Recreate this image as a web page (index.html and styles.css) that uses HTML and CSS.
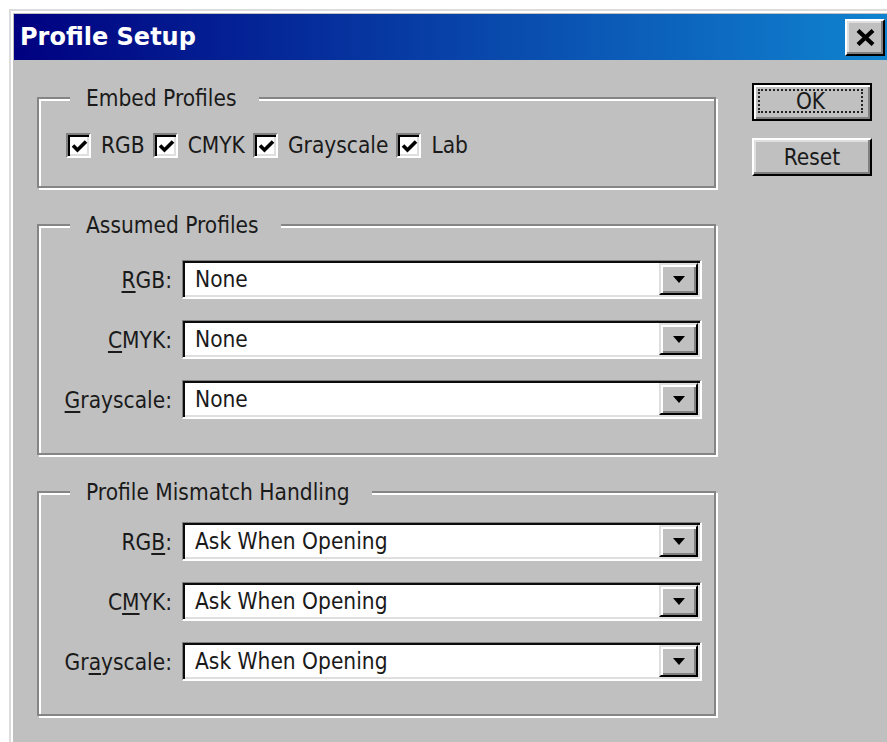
FILE: index.html
```html
<!DOCTYPE html>
<html lang="en">
<head>
<meta charset="utf-8">
<title>Profile Setup</title>
<link rel="stylesheet" href="styles.css">
</head>
<body>
<div class="window">
  <div class="titlebar">
    <span class="title">Profile Setup</span>
    <span class="close-btn">
      <svg width="19" height="17" viewBox="0 0 19 17"><path d="M2 1.5 L17 15.5 M17 1.5 L2 15.5" stroke="#000" stroke-width="4.2" fill="none"/></svg>
    </span>
  </div>

  <div class="dialog-body">
    <div class="groups">
      <section class="group group-embed">
        <div class="group-title">Embed Profiles</div>
        <div class="check-row">
          <label class="check"><span class="box"><svg width="17" height="17" viewBox="0 0 17 17"><path d="M2 7.5 L6.5 12 L15 3.5" stroke="#000" stroke-width="3.6" fill="none"/></svg></span>RGB</label>
          <label class="check"><span class="box"><svg width="17" height="17" viewBox="0 0 17 17"><path d="M2 7.5 L6.5 12 L15 3.5" stroke="#000" stroke-width="3.6" fill="none"/></svg></span>CMYK</label>
          <label class="check"><span class="box"><svg width="17" height="17" viewBox="0 0 17 17"><path d="M2 7.5 L6.5 12 L15 3.5" stroke="#000" stroke-width="3.6" fill="none"/></svg></span>Grayscale</label>
          <label class="check"><span class="box"><svg width="17" height="17" viewBox="0 0 17 17"><path d="M2 7.5 L6.5 12 L15 3.5" stroke="#000" stroke-width="3.6" fill="none"/></svg></span>Lab</label>
        </div>
      </section>

      <section class="group group-assumed">
        <div class="group-title">Assumed Profiles</div>
        <div class="field-list">
          <div class="field"><span class="field-label"><u>R</u>GB:</span><div class="select"><span class="value">None</span><span class="drop-btn"><svg width="12" height="7" viewBox="0 0 12 7"><path d="M0 0 H12 L6 7 Z" fill="#000"/></svg></span></div></div>
          <div class="field"><span class="field-label"><u>C</u>MYK:</span><div class="select"><span class="value">None</span><span class="drop-btn"><svg width="12" height="7" viewBox="0 0 12 7"><path d="M0 0 H12 L6 7 Z" fill="#000"/></svg></span></div></div>
          <div class="field"><span class="field-label"><u>G</u>rayscale:</span><div class="select"><span class="value">None</span><span class="drop-btn"><svg width="12" height="7" viewBox="0 0 12 7"><path d="M0 0 H12 L6 7 Z" fill="#000"/></svg></span></div></div>
        </div>
      </section>

      <section class="group group-mismatch">
        <div class="group-title">Profile Mismatch Handling</div>
        <div class="field-list">
          <div class="field"><span class="field-label">RG<u>B</u>:</span><div class="select"><span class="value">Ask When Opening</span><span class="drop-btn"><svg width="12" height="7" viewBox="0 0 12 7"><path d="M0 0 H12 L6 7 Z" fill="#000"/></svg></span></div></div>
          <div class="field"><span class="field-label">C<u>M</u>YK:</span><div class="select"><span class="value">Ask When Opening</span><span class="drop-btn"><svg width="12" height="7" viewBox="0 0 12 7"><path d="M0 0 H12 L6 7 Z" fill="#000"/></svg></span></div></div>
          <div class="field"><span class="field-label">Gr<u>a</u>yscale:</span><div class="select"><span class="value">Ask When Opening</span><span class="drop-btn"><svg width="12" height="7" viewBox="0 0 12 7"><path d="M0 0 H12 L6 7 Z" fill="#000"/></svg></span></div></div>
        </div>
      </section>
    </div>

    <div class="buttons">
      <button class="btn btn-default"><span class="focus">OK</span></button>
      <button class="btn">Reset</button>
    </div>
  </div>
</div>
</body>
</html>
```

FILE: styles.css
```css
html, body {
  margin: 0;
  padding: 0;
  background: #fff;
  overflow: hidden;
}

body {
  width: 887px;
  height: 742px;
  font-family: "DejaVu Sans Condensed", "Liberation Sans", sans-serif;
  font-size: 22.5px;
  color: #1a1a1a;
}

/* window frame */
.window {
  box-sizing: border-box;
  margin: 9px 0 0 9px;
  width: 880px;
  height: 740px;
  border-top: 2px solid #dcdcdc;
  border-left: 2px solid #dcdcdc;
  padding: 3px 0 0 3px;
  background: #c0c0c0;
  box-shadow: inset 2px 2px 0 #fff;
}

.titlebar {
  height: 46px;
  display: flex;
  align-items: center;
  justify-content: space-between;
  padding: 0 4px 0 6px;
  background: linear-gradient(to right, #000080, #1084d0);
}

.title {
  font-family: "DejaVu Sans", "Liberation Sans", sans-serif;
  font-weight: bold;
  font-size: 24px;
  color: #fff;
  line-height: 1;
}

.close-btn {
  box-sizing: border-box;
  width: 40px;
  height: 37px;
  display: flex;
  align-items: center;
  justify-content: center;
  background: #c0c0c0;
  border-style: solid;
  border-width: 2px;
  border-color: #fff #000 #000 #fff;
  box-shadow: inset -2px -2px 0 #808080, inset 2px 2px 0 #dfdfdf;
}

/* dialog content */
.dialog-body {
  display: flex;
  align-items: flex-start;
  gap: 36px;
  padding: 23px 0 0 23px;
}

.groups {
  width: 679px;
  margin-top: 14px;
  display: flex;
  flex-direction: column;
  gap: 36px;
}

.group {
  box-sizing: border-box;
  border: 2px solid #858585;
  box-shadow: inset 2px 2px 0 #fff, 2px 2px 0 #fff;
}

.group-title {
  width: fit-content;
  margin: -14px 0 0 31px;
  padding: 0 22px 0 16px;
  line-height: 26px;
  background: #c0c0c0;
  white-space: nowrap;
}

.group-embed { padding-bottom: 28px; }
.group-assumed { padding-bottom: 34px; }
.group-mismatch { padding-bottom: 33px; }

/* checkboxes */
.check-row {
  display: flex;
  align-items: center;
  margin: 22px 0 0 27px;
  height: 25px;
}

.check {
  display: flex;
  align-items: center;
  gap: 10px;
  margin-right: 8px;
  line-height: 25px;
}

.box {
  box-sizing: border-box;
  width: 25px;
  height: 25px;
  display: flex;
  align-items: center;
  justify-content: center;
  background: #fff;
  border-style: solid;
  border-width: 2px;
  border-color: #808080 #fff #fff #808080;
  box-shadow: inset 2px 2px 0 #000, inset -2px -2px 0 #dfdfdf;
}

.box svg { margin: 2px 0 0 2px; }

/* labelled drop-down fields */
.field-list {
  display: flex;
  flex-direction: column;
  gap: 21px;
}

.group-assumed .field-list { margin-top: 22px; }
.group-mismatch .field-list { margin-top: 17px; }

.field {
  display: flex;
  align-items: center;
  gap: 10px;
}

.field-label {
  width: 133px;
  text-align: right;
  white-space: nowrap;
}

.field-label u {
  text-underline-offset: 3px;
  text-decoration-thickness: 2px;
}

.select {
  box-sizing: border-box;
  width: 520px;
  height: 39px;
  display: flex;
  align-items: stretch;
  background: #fff;
  border-style: solid;
  border-width: 1px 2px 2px 1px;
  border-color: #808080 #fff #fff #808080;
  box-shadow: inset 2px 2px 0 #0c0c0c, inset -2px -2px 0 #dfdfdf;
  padding: 2px;
}

.value {
  flex: 1;
  padding-left: 10px;
  display: flex;
  align-items: center;
  white-space: nowrap;
}

.drop-btn {
  box-sizing: border-box;
  width: 39px;
  display: flex;
  align-items: center;
  justify-content: center;
  background: #c0c0c0;
  border-style: solid;
  border-width: 2px;
  border-color: #dfdfdf #000 #000 #dfdfdf;
  box-shadow: inset 2px 2px 0 #fff, inset -2px -2px 0 #808080;
}

/* command buttons */
.buttons {
  display: flex;
  flex-direction: column;
  gap: 17px;
}

.btn {
  box-sizing: border-box;
  width: 120px;
  height: 38px;
  padding: 0;
  display: flex;
  align-items: center;
  justify-content: center;
  font: inherit;
  color: #1a1a1a;
  background: #c0c0c0;
  border-style: solid;
  border-width: 2px;
  border-color: #fff #000 #000 #fff;
  box-shadow: inset -2px -2px 0 #808080, inset 2px 2px 0 #dfdfdf;
}

.btn-default {
  border: 2px solid #000;
  box-shadow: inset 2px 2px 0 #fff, inset -2px -2px 0 #808080;
  align-items: stretch;
}

.focus {
  flex: 1;
  display: flex;
  align-items: center;
  justify-content: center;
  margin: 4px 7px 6px 4px;
  border: 2px dotted #222;
}
```
